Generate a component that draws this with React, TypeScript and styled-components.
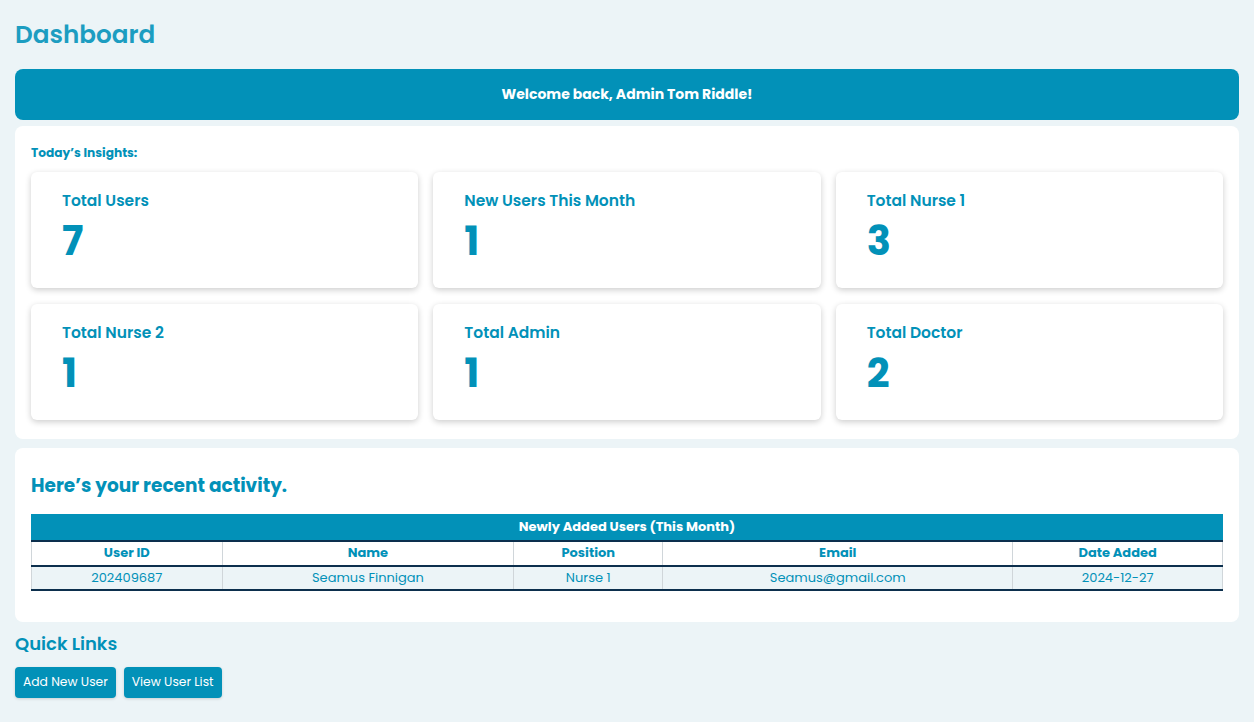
import React from 'react';
import styled, { createGlobalStyle } from 'styled-components';

const GlobalStyle = createGlobalStyle`
  * { box-sizing: border-box; }
  body {
    margin: 0;
    background: #ecf4f7;
    font-family: Poppins, Inter, "Open Sans", sans-serif;
    color: #0291b8;
  }
`;

const Page = styled.div`
  padding: 20px 15px 24px;
  display: flex;
  flex-direction: column;
`;

const Title = styled.h1`
  margin: 0 0 19px;
  font-size: 24.7px;
  font-weight: 600;
  color: #1c9dc1;
  line-height: 30px;
`;

const Banner = styled.div`
  height: 51px;
  background: #0291b8;
  border-radius: 8px;
  color: #fff;
  font-size: 14px;
  font-weight: 700;
  display: flex;
  align-items: center;
  justify-content: center;
  margin-bottom: 6px;
`;

const Panel = styled.section`
  background: #fff;
  border-radius: 8px;
  padding: ${p => p.$pad || '16px'};
  margin-bottom: 9px;
`;

const SmallHeading = styled.div`
  font-size: 12.2px;
  font-weight: 700;
  margin: 2px 0 10px;
`;

const CardGrid = styled.div`
  display: grid;
  grid-template-columns: repeat(3, 1fr);
  gap: 16px 15px;
`;

const Card = styled.div`
  height: 116px;
  background: #fff;
  border-radius: 6px;
  box-shadow: 0 2px 6px rgba(0, 0, 0, 0.2);
  padding: 19px 31px;
`;

const CardLabel = styled.div`
  font-size: 15.5px;
  font-weight: 600;
  line-height: 20px;
`;

const CardValue = styled.div`
  font-size: 40px;
  font-weight: 700;
  line-height: 44px;
  margin-top: 8px;
`;

const ActivityHeading = styled.h2`
  margin: 10px 0 16px;
  font-size: 18.5px;
  font-weight: 700;
  line-height: 24px;
`;

const Table = styled.table`
  width: 100%;
  border-collapse: collapse;
  font-size: 13px;
  text-align: center;
  border-bottom: 2px solid #0c2f4d;
  margin-bottom: 15px;
`;

const Caption = styled.th`
  background: #0291b8;
  color: #fff;
  font-weight: 700;
  height: 26px;
  border: 1px solid #0291b8;
  border-bottom: 2px solid #0c2f4d;
`;

const HeadCell = styled.th`
  font-weight: 700;
  height: 25px;
  border: 1px solid #d0d6da;
  border-top: none;
  border-bottom: 2px solid #0c2f4d;
`;

const Cell = styled.td`
  background: #ecf4f7;
  height: 24px;
  font-weight: 400;
  border: 1px solid #d0d6da;
  border-top: none;
  border-bottom: none;
`;

const LinksHeading = styled.h3`
  margin: 1px 0 11px;
  font-size: 18px;
  font-weight: 600;
  line-height: 24px;
`;

const ButtonRow = styled.div`
  display: flex;
  gap: 8px;
`;

const LinkButton = styled.button`
  height: 31px;
  padding: 0 8px;
  background: #0291b8;
  color: #fff;
  border: none;
  border-radius: 4px;
  font-family: inherit;
  font-size: 12.3px;
  cursor: pointer;
  box-shadow: 0 1px 3px rgba(0, 0, 0, 0.15);
`;

const stats = [
  { label: 'Total Users', value: 7 },
  { label: 'New Users This Month', value: 1 },
  { label: 'Total Nurse 1', value: 3 },
  { label: 'Total Nurse 2', value: 1 },
  { label: 'Total Admin', value: 1 },
  { label: 'Total Doctor', value: 2 },
];

const columns = [
  { title: 'User ID', width: '16%' },
  { title: 'Name', width: '24.5%' },
  { title: 'Position', width: '12.5%' },
  { title: 'Email', width: '29.4%' },
  { title: 'Date Added', width: '17.6%' },
];

const rows = [['202409687', 'Seamus Finnigan', 'Nurse 1', 'Seamus@gmail.com', '2024-12-27']];

export default function App() {
  return (
    <>
      <GlobalStyle />
      <Page>
        <Title>Dashboard</Title>
        <Banner>Welcome back, Admin Tom Riddle!</Banner>
        <Panel $pad="16px 16px 19px">
          <SmallHeading>Today’s Insights:</SmallHeading>
          <CardGrid>
            {stats.map(s => (
              <Card key={s.label}>
                <CardLabel>{s.label}</CardLabel>
                <CardValue>{s.value}</CardValue>
              </Card>
            ))}
          </CardGrid>
        </Panel>
        <Panel $pad="16px">
          <ActivityHeading>Here’s your recent activity.</ActivityHeading>
          <Table>
            <colgroup>
              {columns.map(c => <col key={c.title} style={{ width: c.width }} />)}
            </colgroup>
            <thead>
              <tr>
                <Caption colSpan={5}>Newly Added Users (This Month)</Caption>
              </tr>
              <tr>
                {columns.map(c => <HeadCell key={c.title}>{c.title}</HeadCell>)}
              </tr>
            </thead>
            <tbody>
              {rows.map(r => (
                <tr key={r[0]}>
                  {r.map((v, i) => <Cell key={i}>{v}</Cell>)}
                </tr>
              ))}
            </tbody>
          </Table>
        </Panel>
        <LinksHeading>Quick Links</LinksHeading>
        <ButtonRow>
          <LinkButton>Add New User</LinkButton>
          <LinkButton>View User List</LinkButton>
        </ButtonRow>
      </Page>
    </>
  );
}
